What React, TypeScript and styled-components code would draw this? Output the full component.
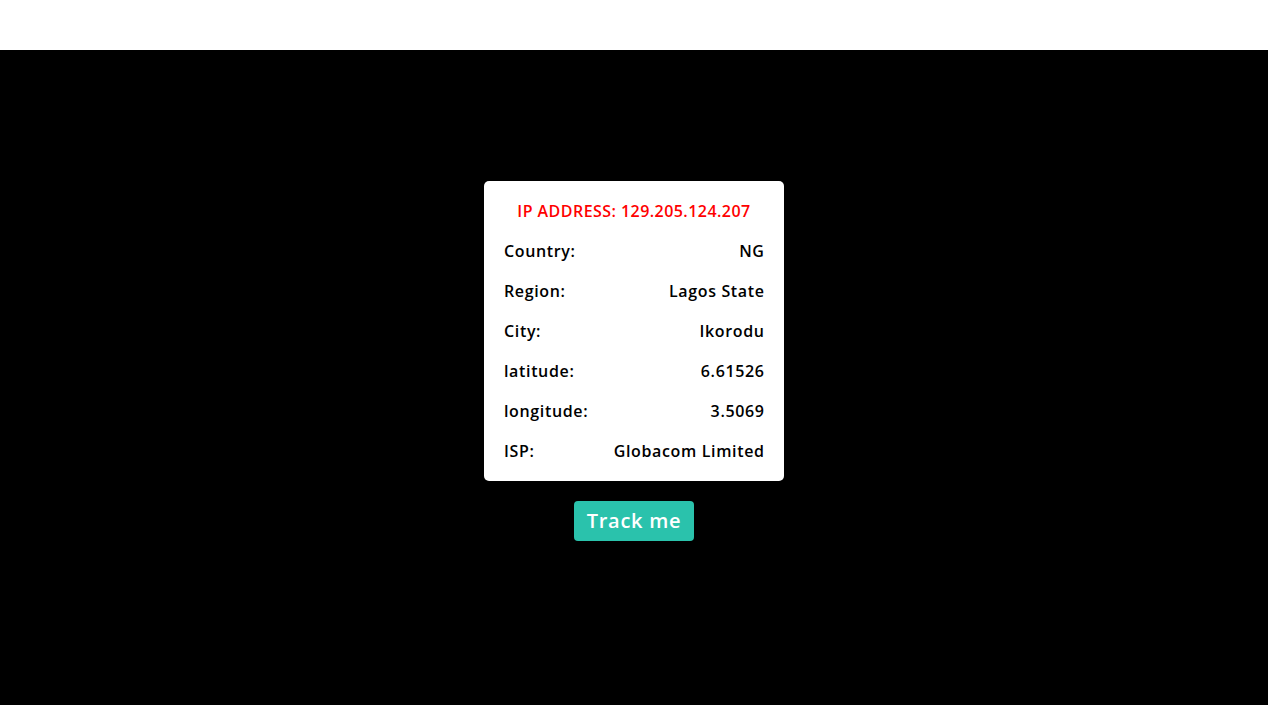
import React from "react";
import styled, { createGlobalStyle } from "styled-components";

const Global = createGlobalStyle`
  html, body { margin: 0; padding: 0; background: #000; }
  body { font-family: "Open Sans", "Noto Sans", sans-serif; }
  * { box-sizing: border-box; }
`;

const Page = styled.div`
  min-height: 705px;
  display: flex;
  flex-direction: column;
`;

const Header = styled.header`
  height: 50px;
  background: #fff;
`;

const Main = styled.main`
  flex: 1;
  background: #000;
  display: flex;
  flex-direction: column;
  align-items: center;
  padding-top: 131px;
  gap: 20px;
`;

const Card = styled.section`
  width: 300px;
  background: #fff;
  border-radius: 5px;
  padding: 10px 20px;
  display: flex;
  flex-direction: column;
`;

const Title = styled.h2`
  margin: 0;
  height: 40px;
  display: flex;
  align-items: center;
  justify-content: center;
  color: #ff0000;
  font-size: 16px;
  font-weight: 600;
  letter-spacing: 0.45px;
`;

const Row = styled.div`
  height: 40px;
  display: flex;
  align-items: center;
  justify-content: space-between;
  font-size: 16px;
  font-weight: 600;
  letter-spacing: 0.65px;
  color: #000;
`;

const Value = styled.span`
  margin-right: -0.65px;
`;

const Button = styled.button`
  width: 120px;
  height: 40px;
  border: none;
  border-radius: 4px;
  background: #2ac2ac;
  color: #fff;
  font-family: inherit;
  font-size: 20px;
  font-weight: 600;
  letter-spacing: 0.75px;
  cursor: pointer;
  padding: 0 0 2px;
`;

const rows: [string, string][] = [
  ["Country:", "NG"],
  ["Region:", "Lagos State"],
  ["City:", "Ikorodu"],
  ["latitude:", "6.61526"],
  ["longitude:", "3.5069"],
  ["ISP:", "Globacom Limited"],
];

export default function App() {
  return (
    <>
      <Global />
      <Page>
        <Header />
        <Main>
          <Card>
            <Title>IP ADDRESS: 129.205.124.207</Title>
            {rows.map(([k, v]) => (
              <Row key={k}>
                <span>{k}</span>
                <Value>{v}</Value>
              </Row>
            ))}
          </Card>
          <Button>Track me</Button>
        </Main>
      </Page>
    </>
  );
}
